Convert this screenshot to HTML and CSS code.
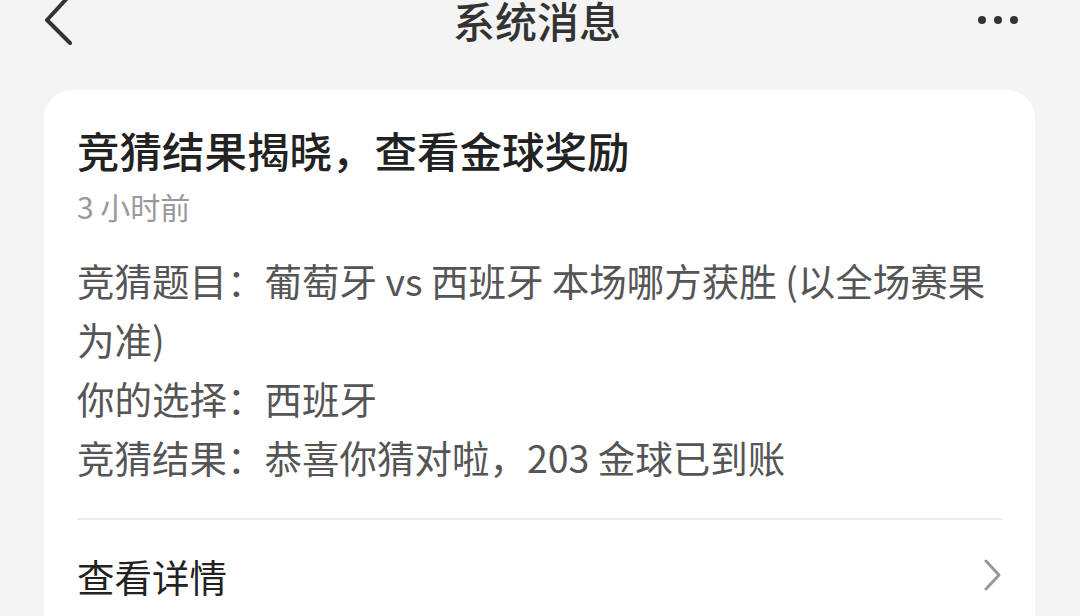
FILE: index.html
```html
<!DOCTYPE html>
<html lang="zh-CN">
<head>
    <meta charset="UTF-8">
    <meta name="viewport" content="width=device-width, initial-scale=1.0">
    <title>系统消息</title>
    <link rel="stylesheet" href="styles.css">
</head>
<body>
    <!-- top navigation -->
    <div class="nav-bar">
        <svg class="nav-back" width="40" height="60" viewBox="0 0 40 60">
            <polyline points="27,-6 3,20 26,43" fill="none" stroke="#333" stroke-width="4" stroke-linecap="round" stroke-linejoin="round"/>
        </svg>
        <div class="nav-title">系统消息</div>
        <svg class="nav-more" width="44" height="12" viewBox="0 0 44 12">
            <circle cx="6" cy="6" r="4" fill="#333"/>
            <circle cx="22" cy="6" r="4" fill="#333"/>
            <circle cx="38" cy="6" r="4" fill="#333"/>
        </svg>
    </div>

    <div class="message-card">
        <h1 class="message-title">竞猜结果揭晓，查看金球奖励</h1>
        <div class="message-time">3 小时前</div>
        <div class="message-body">
            <p>竞猜题目：葡萄牙 vs 西班牙 本场哪方获胜 (以全场赛果为准)</p>
            <p>你的选择：西班牙</p>
            <p>竞猜结果：恭喜你猜对啦，203 金球已到账</p>
        </div>
        <div class="message-link">
            <span>查看详情</span>
            <svg width="20" height="32" viewBox="0 0 20 32">
                <polyline points="3,2 16,16 3,30" fill="none" stroke="#999" stroke-width="3" stroke-linecap="round" stroke-linejoin="round"/>
            </svg>
        </div>
    </div>
</body>
</html>
```

FILE: styles.css
```css
body {
    font-family: "Noto Sans CJK SC", "Noto Sans", sans-serif;
    margin: 0;
    padding: 0;
    background-color: #f4f4f4;
    color: #333;
    overflow: hidden;
}

.nav-bar {
    height: 40px;
    display: flex;
    align-items: center;
    justify-content: space-between;
    padding: 0 60px 0 44px;
    margin-bottom: 50px;
}

.nav-back {
    display: block;
    align-self: flex-start;
}

.nav-title {
    font-size: 42px;
    line-height: 40px;
    font-weight: 500;
    color: #333;
    margin-left: 14px;
}

.nav-more {
    display: block;
}

.message-card {
    margin: 0 45px 0 44px;
    padding: 32px 33px 0 33px;
    background-color: #fff;
    border-radius: 28px;
    min-height: 600px;
}

.message-title {
    margin: 0;
    font-size: 42.5px;
    line-height: 56px;
    font-weight: 500;
    color: #222;
}

.message-time {
    font-size: 30px;
    line-height: 40px;
    color: #999;
    margin-top: 8px;
}

.message-body {
    margin-top: 24px;
    padding-bottom: 32px;
    border-bottom: 2px solid #ebebeb;
}

.message-body p {
    margin: 0;
    font-size: 37.5px;
    line-height: 59px;
    color: #555;
}

.message-link {
    height: 110px;
    display: flex;
    align-items: center;
    justify-content: space-between;
    font-size: 37.5px;
    color: #222;
}

.message-link svg {
    display: block;
    margin-right: -1px;
}
```
